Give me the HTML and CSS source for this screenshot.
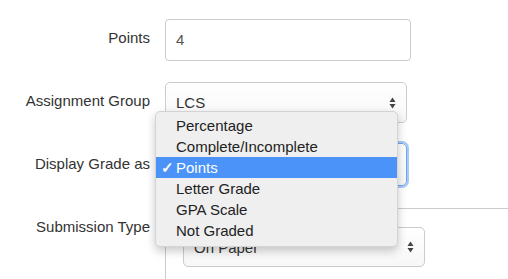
FILE: index.html
```html
<!DOCTYPE html>
<html>
	<head>
		<meta charset="UTF-8">
		<title>Assignment</title>
		<link rel="stylesheet" href="styles.css">
	</head>
	<body>
		<div class="form">
			<div class="row">
				<div class="label">Points</div>
				<div class="input">4</div>
			</div>
			<div class="row row-group">
				<div class="label">Assignment Group</div>
				<div class="select">
					<span>LCS</span>
					<svg class="arrows" width="7" height="12" viewBox="0 0 7 12"><polygon points="0.5,5 3.5,0.5 6.5,5" /><polygon points="0.5,7 3.5,11.5 6.5,7" /></svg>
				</div>
			</div>
			<div class="row row-grade">
				<div class="label">Display Grade as</div>
				<div class="select select-focus">
					<span class="hidden-value">Points</span>
					<svg class="arrows" width="7" height="12" viewBox="0 0 7 12"><polygon points="0.5,5 3.5,0.5 6.5,5" /><polygon points="0.5,7 3.5,11.5 6.5,7" /></svg>
				</div>
			</div>
			<div class="row row-submit">
				<div class="label">Submission Type</div>
				<div class="panel">
					<div class="select select-submit">
						<span>On Paper</span>
						<svg class="arrows" width="7" height="12" viewBox="0 0 7 12"><polygon points="0.5,5 3.5,0.5 6.5,5" /><polygon points="0.5,7 3.5,11.5 6.5,7" /></svg>
					</div>
				</div>
			</div>
		</div>

		<!-- open popup of the "Display Grade as" select -->
		<ul class="menu">
			<li>Percentage</li>
			<li>Complete/Incomplete</li>
			<li class="active"><span class="check">✓</span>Points</li>
			<li>Letter Grade</li>
			<li>GPA Scale</li>
			<li>Not Graded</li>
		</ul>
	</body>
</html>
```

FILE: styles.css
```css
* {margin: 0; padding: 0; box-sizing: border-box;}
ul, li {list-style: none;}
body {
	font-family: "Liberation Sans", Arial, sans-serif;
	font-size: 15px;
	color: #333;
	background: #fff;
	overflow: hidden;
}
.form {
	padding-top: 19px;
}
.row {
	display: flex;
	align-items: flex-start;
}
.label {
	width: 165px;
	padding-right: 15px;
	padding-top: 9px;
	line-height: 20px;
	text-align: right;
	color: #333;
}
.input {
	width: 246px; height: 42px;
	border: 1px solid #ccc;
	border-radius: 4px;
	padding: 0 10px;
	line-height: 40px;
	color: #555;
}
.select {
	display: flex;
	align-items: center;
	justify-content: space-between;
	width: 242px; height: 41px;
	border: 1px solid #ccc;
	border-radius: 5px;
	padding: 0 10px 0 10px;
	color: #333;
	background: linear-gradient(#fff, #f7f7f7);
}
.arrows {
	fill: #444;
}
.row-group {
	margin-top: 21px;
}
.row-grade {
	margin-top: 20px;
}
.row-grade .label {
	padding-top: 11px;
}
.select-focus {
	height: 43px;
	border-color: #6fa6ee;
	box-shadow: 0 0 0 2px #a9c9f5;
}
/* value sits under the open popup */
.hidden-value {
	visibility: hidden;
}
.row-submit {
	margin-top: 22px;
}
.panel {
	flex: 1;
	height: 80px;
	border-top: 1px solid #ccc;
	border-left: 1px solid #ccc;
	padding: 18px 0 0 17px;
}
.select-submit {
	height: 40px;
}

.menu {
	position: absolute;
	left: 155px; top: 111px;
	width: 243px;
	padding: 3px 0 5px;
	background: #efefef;
	border: 1px solid #d4d4d4;
	border-radius: 5px;
	box-shadow: 0 4px 10px rgba(0, 0, 0, 0.22);
	color: #222;
}
.menu li {
	position: relative;
	height: 21px;
	line-height: 21px;
	padding-left: 20px;
}
.menu li.active {
	background: #4b93f8;
	color: #fff;
}
.menu .check {
	position: absolute;
	left: 5px; top: 0;
	font-weight: bold;
}
```
